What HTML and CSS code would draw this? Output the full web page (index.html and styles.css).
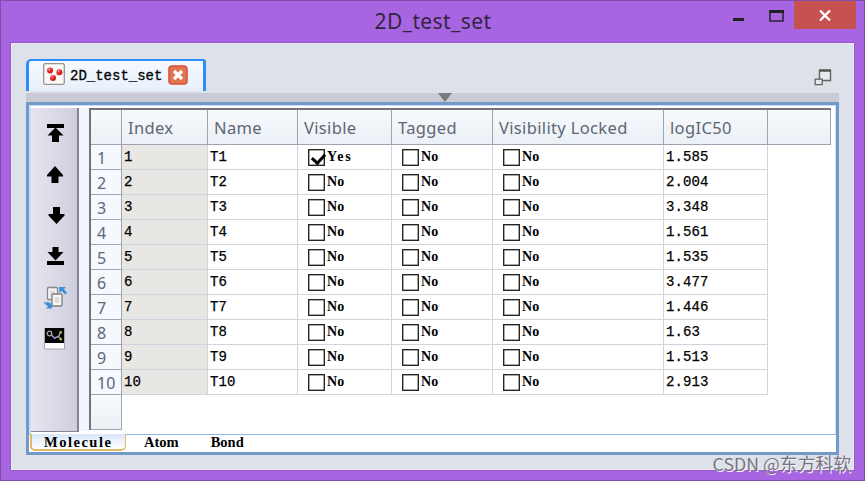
FILE: index.html
```
<!doctype html>
<html lang=en >
<head>
<meta charset=utf-8 >
<title>2D_test_set</title>
<meta name=viewport content='width=device-width,initial-scale=1' >
<link rel="stylesheet" href="styles.css">
</head>
<body>

<div id=window >

	<div id=titleBar >
		<h1>2D_test_set</h1>
		<div class=winButtons >
			<svg class=minimize width=11 height=3 ><path d="M0 0h11v3H0z" fill="#222"/></svg>
			<svg class=maximize width=15 height=12 ><path d="M1 1.5h13v9.5H1z" fill="none" stroke="#2b2333" stroke-width=1.6 /><path d="M0 0h15v3H0z" fill="#222"/></svg>
			<div class=close ><svg width=12 height=11 ><path d="M1 .5l10 10M11 .5l-10 10" stroke="#fff" stroke-width=2.3 /></svg></div>
		</div>
	</div>

	<div id=client >

		<div id=docTabs >
			<div class=docTab >
				<svg class=docIcon width=22 height=22 viewBox="0 0 22 22" >
					<defs><radialGradient id=ball cx=".35" cy=".3" ><stop offset="0" stop-color="#ffd0cc"/><stop offset=".35" stop-color="#f04a46"/><stop offset="1" stop-color="#d61d22"/></radialGradient></defs>
					<rect x=.7 y=.7 width=20.6 height=20.6 rx=1.5 fill="#fcfaf8" stroke="#99948c" stroke-width=1.3 />
					<path d="M7 8l3 7 6-5" fill="none" stroke="#e7c3c3"/>
					<circle cx=7 cy=7.5 r=3 fill="url(#ball)"/><circle cx=16.4 cy=9.3 r=3 fill="url(#ball)"/><circle cx=10 cy=15 r=3 fill="url(#ball)"/>
				</svg>
				<span>2D_test_set</span>
				<svg class=docClose width=20 height=20 ><rect x=1 y=1 width=18 height=18 rx=3 fill="#e0764e" stroke="#de4f42" stroke-width=1.6 /><path d="M6 6l8 8M14 6l-8 8" stroke="#fff" stroke-width=3.2 /></svg>
			</div>
			<svg class=restore width=18 height=17 ><path d="M5.5 1.5h11v10h-11z" fill="#e8ebef" stroke="#63635f" stroke-width=1.4 /><path d="M5 1.5h12" stroke="#55554f" stroke-width=2.4 /><path d="M1.2 10.2h7v5.5h-7z" fill="#e6e9ee" stroke="#63635f" stroke-width=1.3 /></svg>
		</div>

		<div id=splitter ><svg width=14 height=9 ><path d="M0 0h14L7 9z" fill="#7c7b7c"/></svg></div>

		<div id=frame >

			<div id=main >

				<div id=toolbar >
					<svg width=24 height=24 ><path d="M4 2h17v4H4zM12.500 5.500l8 8h-4.500v6.500H9v-6.500H4.500z"/></svg>
					<svg width=24 height=24 ><path d="M12 3l8 9v1.500h-4.500V20h-7v-6.500H4V12z"/></svg>
					<svg width=24 height=24 ><path d="M10 3h7v7h4.500v1.500l-8 8.500-8-8.500V10H10z"/></svg>
					<svg width=24 height=24 ><path d="M9.500 2h6v5h5l-8 8.500-8-8.500h5zM4 16h17v4H4z"/></svg>
					<svg width=24 height=24 >
						<rect x=4.500 y=1.500 width=10 height=12 rx=1 fill="#f3f3f4" stroke="#8a8988" stroke-width=1.300 /><path d="M7 4.500h5v6H7z" fill="#dcdce0"/>
						<rect x=9 y=8 width=10 height=12 rx=1 fill="#f8f8f8" stroke="#7d7c7b" stroke-width=1.300 /><path d="M11.500 11h5v6h-5z" fill="#dcdce0"/>
						<path d="M16 1h7l-2 2 3 4-1.500 1.500-4-3.500-2 2zM1 15l2 2 2-1.500 2 2 2-1v6H3l2-2-3.500-3z" fill="#3f8fd8"/>
					</svg>
					<svg width=24 height=24 >
						<path d="M1.500 1.500h20v20.500h-20z" fill="#fff" stroke="#a5a5ae"/><path d="M2 1h19v15H2z" fill="#050505"/>
						<circle cx=6.500 cy=6.500 r=2.300 fill="none" stroke="#aaa" stroke-width=1.300 /><path d="M8.500 8l3 3 4-1.500 2-4M15 9.500l3 2" fill="none" stroke="#aaa" stroke-width=1.400 /><path d="M16.500 5l2.500.5M16.500 12l2.500.5" stroke="#c9bb3c" stroke-width=1.800 /><path d="M10.500 11h2.500" stroke="#7580e8" stroke-width=2 />
					</svg>
				</div>

				<div id=sheet >
					<table>
						<colgroup><col class=cNum ><col class=cIndex ><col class=cName ><col class=cVisible ><col class=cTagged ><col class=cLocked ><col class=cLog ><col class=cRest ></colgroup>
						<thead>
							<tr><th></th><th>Index</th><th>Name</th><th>Visible</th><th>Tagged</th><th>Visibility Locked</th><th>logIC50</th><th></th></tr>
						</thead>
						<tbody>
							<tr><th>1</th><td>1</td><td>T1</td><td class=flag ><i class="box on"></i><span class=yes >Yes</span></td><td class=flag ><i class=box ></i>No</td><td class=flag ><i class=box ></i>No</td><td>1.585</td></tr>
							<tr><th>2</th><td>2</td><td>T2</td><td class=flag ><i class=box ></i>No</td><td class=flag ><i class=box ></i>No</td><td class=flag ><i class=box ></i>No</td><td>2.004</td></tr>
							<tr><th>3</th><td>3</td><td>T3</td><td class=flag ><i class=box ></i>No</td><td class=flag ><i class=box ></i>No</td><td class=flag ><i class=box ></i>No</td><td>3.348</td></tr>
							<tr><th>4</th><td>4</td><td>T4</td><td class=flag ><i class=box ></i>No</td><td class=flag ><i class=box ></i>No</td><td class=flag ><i class=box ></i>No</td><td>1.561</td></tr>
							<tr><th>5</th><td>5</td><td>T5</td><td class=flag ><i class=box ></i>No</td><td class=flag ><i class=box ></i>No</td><td class=flag ><i class=box ></i>No</td><td>1.535</td></tr>
							<tr><th>6</th><td>6</td><td>T6</td><td class=flag ><i class=box ></i>No</td><td class=flag ><i class=box ></i>No</td><td class=flag ><i class=box ></i>No</td><td>3.477</td></tr>
							<tr><th>7</th><td>7</td><td>T7</td><td class=flag ><i class=box ></i>No</td><td class=flag ><i class=box ></i>No</td><td class=flag ><i class=box ></i>No</td><td>1.446</td></tr>
							<tr><th>8</th><td>8</td><td>T8</td><td class=flag ><i class=box ></i>No</td><td class=flag ><i class=box ></i>No</td><td class=flag ><i class=box ></i>No</td><td>1.63</td></tr>
							<tr><th>9</th><td>9</td><td>T9</td><td class=flag ><i class=box ></i>No</td><td class=flag ><i class=box ></i>No</td><td class=flag ><i class=box ></i>No</td><td>1.513</td></tr>
							<tr><th>10</th><td>10</td><td>T10</td><td class=flag ><i class=box ></i>No</td><td class=flag ><i class=box ></i>No</td><td class=flag ><i class=box ></i>No</td><td>2.913</td></tr>
							<tr class=filler ><th></th></tr>
						</tbody>
					</table>
				</div>

			</div>

			<div id=sheetTabs >
				<span class=active >Molecule</span>
				<span class=atom >Atom</span>
				<span class=bond >Bond</span>
			</div>

		</div>

	</div>

	<div id=watermark >CSDN @东方科软</div>

</div>

</body>
</html>
```
FILE: styles.css
```
html, body { height: 100%; margin: 0; overflow: hidden; }
* { box-sizing: border-box; }
svg { display: block; flex: none; }

#window { background-color: #a865e2; border: 1px solid #7e4eaa; height: 481px; padding: 0 9px 10px; position: relative; width: 865px; }

#titleBar { height: 41px; position: relative; }
#titleBar h1 { color: #33243f; font: 21px/41px "Noto Sans", sans-serif; letter-spacing: .4px; margin: 0; padding-left: 1px; text-align: center; }

.winButtons { display: flex; position: absolute; right: -1px; top: 0; }
.minimize { margin: 17px 25px 0 0; }
.maximize { margin: 9px 10px 0 0; }
.close { align-items: center; background-color: #c75050; display: flex; height: 28px; justify-content: center; width: 62px; }

#client { background-color: #dde1e9; border: 1px solid #9558c9; box-shadow: inset 1px 1px #eeeaf4, inset -1px -1px #eeeaf4; height: 429px; padding: 16px 15px 0; }

#docTabs { align-items: flex-start; display: flex; height: 34px; justify-content: space-between; }
.docTab { align-items: center; background: linear-gradient( #f6f9ff, #e7f0fb ); border: solid #2d8dfa; border-width: 2px 3px 0; border-radius: 5px 3px 0 0; color: #000; display: flex; font: 14px "Liberation Mono", monospace; height: 32px; padding: 0 0 4px 14px; -webkit-text-stroke: .3px #000; width: 180px; }
.docTab span { padding: 3px 0 0 5px; width: 102px; }
.docClose { margin-left: 1px; margin-top: 1px; }
.restore { margin: 10px 7px 0 0; }

#splitter { background-color: #cbcad7; display: flex; height: 9px; justify-content: center; padding-left: 24px; }

#frame { background-color: #fff; border: 3px solid #7299c7; height: 353px; width: 813px; }
#main { border: solid #c8dffa; border-width: 1px 1px 0 2px; display: flex; height: 329px; padding-top: 2px; }

#toolbar { background: linear-gradient( 90deg, #e6e5ef, #cfcedc ); border-right: 2px solid #85829a; border-bottom: 1px solid #85829a; display: flex; flex: none; flex-direction: column; gap: 17px; height: 324px; padding: 14px 0 0 12px; width: 48px; }

#sheet { background: linear-gradient( 90deg, #f1f5ff 10px, #fff 10px ); padding-left: 10px; height: 323px; }

table { border-collapse: separate; border-left: 2px solid #747474; border-spacing: 0; border-top: 2px solid #747474; height: 322px; table-layout: fixed; width: 742px; }
.cNum { width: 31px; } .cIndex { width: 86px; } .cName { width: 90px; } .cVisible { width: 94px; }
.cTagged { width: 101px; } .cLocked { width: 171px; } .cLog { width: 104px; } .cRest { width: 63px; }

th, td { overflow: hidden; padding: 0; text-align: left; white-space: nowrap; }
th { border: solid #9ea5b1; border-width: 0 1px 1px 0; color: #5e6674; font: 16px/20px "Noto Sans", sans-serif; }
thead th { background: linear-gradient( #f8fafd, #eaf0f5 ); font-size: 16.5px; height: 35px; letter-spacing: .35px; padding: 2px 0 0 6px; }
tbody th { background-color: #f5f8fc; height: 25px; padding: 1px 0 0 6px; }
td { border: solid #d1d3df; border-width: 0 1px 1px 0; color: #000; font: 14px/24px "Liberation Mono", monospace; height: 25px; letter-spacing: .1px; padding-left: 2px; -webkit-text-stroke: .25px #000; }
td:nth-child(2) { background-color: #e8e7e3; }
.flag { font: bold 14px/24px "Liberation Serif", serif; letter-spacing: .2px; padding-left: 3px; -webkit-text-stroke: 0; }
.yes { letter-spacing: 1.800px; }
.filler th { background: linear-gradient( #f8fafd, #eaf0f5 ); height: 35px; }

.box { background-color: #fff; border: 1.500px solid #252525; box-shadow: inset 0 0 0 .5px #555; display: inline-block; height: 17px; margin: 0 2px 0 7px; position: relative; vertical-align: -5px; width: 17px; }
.on::after { border: solid #000; border-width: 0 3px 3px 0; content: ""; height: 10px; left: 5px; position: absolute; top: 1px; transform: rotate( 42deg ); width: 6px; }

#sheetTabs { border-top: 1px solid #8db5e5; display: flex; font: bold 14.500px/15px "Liberation Serif", serif; height: 18px; }
.active { background: linear-gradient( #d9e7f8, #fff ); border: solid #dfba66; border-radius: 0 0 5px 5px; border-width: 0 1px 2px 2px; height: 17px; letter-spacing: 1.500px; margin-left: 1px; margin-top: -1px; padding: 1px 0 0 12px; width: 96px; }
.atom { margin-left: 18px; }
.bond { margin-left: 32px; }

#watermark { bottom: 6px; color: #77747f; font: 17.800px/22px "Noto Sans CJK SC", sans-serif; position: absolute; right: 13px; text-shadow: 1px 1px #f6f2fa; }
```
